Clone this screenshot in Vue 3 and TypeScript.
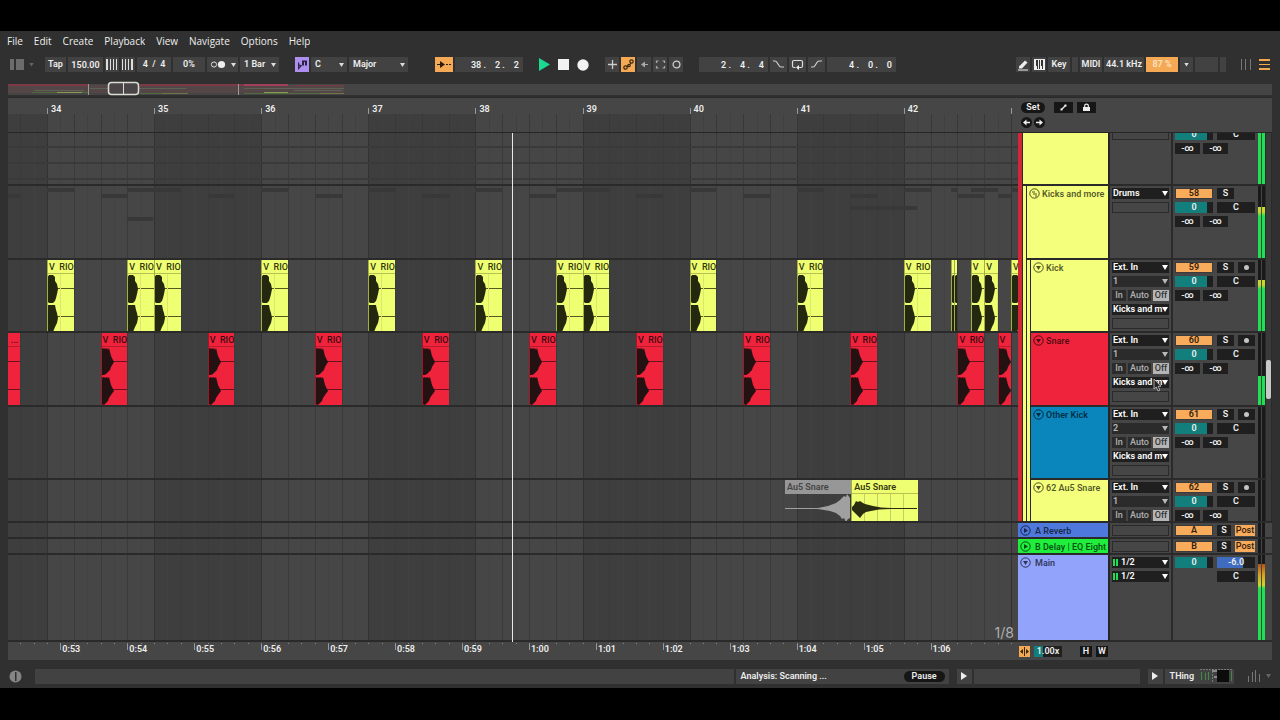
<script setup lang="ts">
import { ref } from 'vue'

const FIRST_BAR = 33.636
const BARS_SHOWN = 9.43

const at = (bar: number) => `${((bar - FIRST_BAR) / BARS_SHOWN) * 100}%`
const span = (bars: number) => `${(bars / BARS_SHOWN) * 100}%`

interface Clip {
  start: number
  length: number
  label: string
  kind: 'kick' | 'snare' | 'tail' | 'reverse' | 'hit'
}

interface Track {
  name: string
  color: string
  depth: number
  type: 'group' | 'inner' | 'audio'
  input?: string
  channel?: string
  output?: string
  number: string
  level: number
  clips: Clip[]
}

const kick = (start: number, length = 0.25, label = 'V  RIO'): Clip => ({ start, length, label, kind: 'kick' })
const snare = (start: number, length = 0.25, label = 'V  RIO'): Clip => ({ start, length, label, kind: 'snare' })

const kicks: Clip[] = [
  kick(34), kick(34.75), kick(35), kick(36), kick(37), kick(38), kick(38.75), kick(39),
  kick(40), kick(41), kick(42), kick(42.4375, 0.031, ''), kick(42.469, 0.031, ''),
  kick(42.625, 0.125, 'V'), kick(42.75, 0.125, 'V'), kick(43, 0.25, 'V'),
]
const snares: Clip[] = [
  { start: 33.5, length: 0.25, label: '...', kind: 'tail' },
  snare(34.5), snare(35.5), snare(36.5), snare(37.5), snare(38.5), snare(39.5),
  snare(40.5), snare(41.5), snare(42.5), snare(42.875, 0.125, 'V'),
]

const tracks: Track[] = [
  { name: '', color: '#f4ff7c', depth: 0, type: 'group', number: '', level: 96, clips: [] },
  { name: 'Kicks and more', color: '#f4ff7c', depth: 1, type: 'inner', input: 'Drums', number: '58', level: 71, clips: [] },
  { name: 'Kick', color: '#f4ff7c', depth: 2, type: 'audio', input: 'Ext. In', channel: '1', output: 'Kicks and m', number: '59', level: 72, clips: kicks },
  { name: 'Snare', color: '#ef233c', depth: 2, type: 'audio', input: 'Ext. In', channel: '1', output: 'Kicks and m', number: '60', level: 40, clips: snares },
  { name: 'Other Kick', color: '#0a86bd', depth: 2, type: 'audio', input: 'Ext. In', channel: '2', output: 'Kicks and m', number: '61', level: 0, clips: [] },
  {
    name: '62 Au5 Snare', color: '#f4ff7c', depth: 2, type: 'audio', input: 'Ext. In', channel: '1', number: '62', level: 0,
    clips: [
      { start: 40.89, length: 0.62, label: 'Au5 Snare', kind: 'reverse' },
      { start: 41.51, length: 0.62, label: 'Au5 Snare', kind: 'hit' },
    ],
  },
]

const returns = [
  { id: 'A', name: 'A Reverb', color: '#4f78dc' },
  { id: 'B', name: 'B Delay | EQ Eight', color: '#1fee3c' },
]

const summary = [
  ...kicks.map((c) => ({ start: c.start, length: c.length, row: 'high' })),
  ...snares.map((c) => ({ start: c.start, length: c.length, row: 'mid' })),
  { start: 34.75, length: 0.24, row: 'low' },
  { start: 41.5, length: 0.62, row: 'mid2' },
]

const bars = Array.from({ length: 10 }, (_, i) => 34 + i)
const darkBars = [33, 35, 37, 39, 41]
const gridLines = Array.from({ length: 75 }, (_, i) => ({
  bar: 33.75 + i * 0.125,
  beat: i % 2 === 0,
  barLine: (i - 2) % 8 === 0,
}))
const seconds = Array.from({ length: 14 }, (_, i) => {
  const s = 53 + i
  return { bar: 34.125 + i * 0.625, label: `${Math.floor(s / 60)}:${String(s % 60).padStart(2, '0')}` }
})

const tempo = ref('150.00')
const position = ref('38 .    2 .    2')
const loopStart = ref('2 .    4 .    4')
const loopLength = ref('4 .    0 .    0')

const kickShape =
  'M0 4L2 1L6 1L8 3L8 7L10 10L11 15L10 20L9 24L8 27L6 29L2 29L0 27ZM0 31L8 31L9 36L10 39L11 44L10 49L8 53L6 58L2 58L0 56Z'
const snareShape =
  'M0 2L2 1L3 2L4 1L5 2L6 1L7 3L8 1L9 5L10 9L13 15L10 20L9 23L7 25L5 27L3 28L0 28ZM0 31L3 30L4 31L5 30L7 31L8 30L9 34L10 38L13 44L10 48L8 51L7 54L5 56L3 58L0 57Z'
</script>

<template>
  <main class="app">
    <nav class="menu">
      <button v-for="m in ['File', 'Edit', 'Create', 'Playback', 'View', 'Navigate', 'Options', 'Help']" :key="m">{{ m }}</button>
    </nav>

    <header class="toolbar">
      <div class="group">
        <button class="flat browser" aria-label="Browser layout">
          <svg width="14" height="15" viewBox="0 0 14 15"><path fill="#6c6c6c" d="M0 2h4v11H0zM6 2h8v11H6z" /></svg>
        </button>
        <span class="drop-mark"></span>
        <button class="cell tap">Tap</button>
        <input v-model="tempo" class="cell tempo" aria-label="Tempo" />
        <button class="cell nudge" aria-label="Nudge down">
          <svg width="12" height="11" viewBox="0 0 12 11"><path fill="#ddd" d="M0 0h2v11H0zM4 0h1v11H4zM7 0h1v11H7zM10 0h1v11h-1z" /></svg>
        </button>
        <button class="cell nudge" aria-label="Nudge up">
          <svg width="12" height="11" viewBox="0 0 12 11"><path fill="#ddd" d="M0 0h1v11H0zM3 0h1v11H3zM6 0h1v11H6zM9 0h2v11H9z" /></svg>
        </button>
        <button class="cell signature">4 &nbsp;/ &nbsp;4</button>
        <button class="cell swing">0%</button>
        <button class="cell metro" aria-label="Metronome">
          <svg width="26" height="11" viewBox="0 0 26 11"><circle cx="4" cy="5.500" r="2.600" fill="none" stroke="#ddd" /><circle cx="11.500" cy="5.500" r="3.600" fill="#eee" /><path fill="#ddd" d="M21 4h5l-2.500 4z" /></svg>
        </button>
        <label class="pick q"><select class="cell" aria-label="Quantization"><option>1 Bar</option></select></label>
      </div>

      <div class="group scale">
        <button class="cell purple" aria-label="Scale mode">
          <svg width="10" height="11" viewBox="0 0 10 11"><path fill="none" stroke="#2a2048" stroke-width="1.200" d="M1.600 3.500v6l2.600-2.700-2.600-1" /><path fill="#2a2048" d="M5 1.500h2v5H5zM8 1.500h2v5H8zM5 1.500h5v1.500H5z" /></svg>
        </button>
        <label class="pick key"><select class="cell" aria-label="Root note"><option>C</option></select></label>
        <label class="pick mode"><select class="cell" aria-label="Scale"><option>Major</option></select></label>
      </div>

      <div class="group">
        <button class="cell orange follow" aria-label="Follow">
          <svg width="14" height="9" viewBox="0 0 14 9"><path fill="#2b1c08" d="M0 4h3V1l5 3.500L3 8V5H0zM9 4h2v1H9zM12 4h2v1h-2z" /></svg>
        </button>
        <input v-model="position" class="cell position" aria-label="Position" />
      </div>

      <div class="group transport">
        <button class="flat" aria-label="Play"><svg width="11" height="13" viewBox="0 0 11 13"><path fill="#19dc92" d="M0 0L11 6.500L0 13z" /></svg></button>
        <button class="flat" aria-label="Stop"><svg width="11" height="11" viewBox="0 0 11 11"><path fill="#f2f2f2" d="M0 0h11v11H0z" /></svg></button>
        <button class="flat" aria-label="Record"><svg width="12" height="12" viewBox="0 0 12 12"><circle cx="6" cy="6" r="5.700" fill="#f2f2f2" /></svg></button>
      </div>

      <div class="group tools">
        <button class="cell" aria-label="Overdub"><svg width="11" height="11" viewBox="0 0 11 11"><path stroke="#ccc" stroke-width="1.300" d="M5.500 1v9M1 5.500h9" /></svg></button>
        <button class="cell orange" aria-label="Automation arm"><svg width="11" height="11" viewBox="0 0 11 11"><g fill="none" stroke="#3a270c" stroke-width="1.200"><circle cx="2.500" cy="8.500" r="1.700" /><circle cx="8.500" cy="2.500" r="1.700" /><circle cx="6" cy="6.500" r="1.200" /><path d="M4 7.500l1-1M7 5.500l1-1.500" /></g></svg></button>
        <button class="cell" aria-label="Re-enable automation"><svg width="11" height="11" viewBox="0 0 11 11"><path fill="#aaa" d="M2 5.500L6 2.500V5h3v1H6v2.500z" /></svg></button>
        <button class="cell" aria-label="Capture"><svg width="11" height="11" viewBox="0 0 11 11"><path fill="none" stroke="#aaa" stroke-width="1.200" d="M1.500 4V2h2M7.500 2h2v2M9.500 7v2h-2M3.500 9h-2V7" /></svg></button>
        <button class="cell" aria-label="Session record"><svg width="11" height="11" viewBox="0 0 11 11"><circle cx="5.500" cy="5.500" r="3.400" fill="none" stroke="#ccc" stroke-width="1.300" /></svg></button>
      </div>

      <div class="group">
        <input v-model="loopStart" class="cell loop" aria-label="Loop start" />
        <button class="cell w18" aria-label="Punch in"><svg width="13" height="11" viewBox="0 0 13 11"><path fill="none" stroke="#ccc" stroke-width="1.200" d="M1 2h2c3 0 3 6 6 6h3" /></svg></button>
        <button class="cell w18" aria-label="Loop"><svg width="13" height="11" viewBox="0 0 13 11"><path fill="none" stroke="#ddd" stroke-width="1.200" d="M4.500 8.500H3a1.500 1.500 0 0 1-1.500-1.500V3A1.500 1.500 0 0 1 3 1.500h7A1.500 1.500 0 0 1 11.500 3v4A1.500 1.500 0 0 1 10 8.500H7" /><path fill="#eee" d="M5 8.500l3-2.500v5z" /></svg></button>
        <button class="cell w18" aria-label="Punch out"><svg width="13" height="11" viewBox="0 0 13 11"><path fill="none" stroke="#ccc" stroke-width="1.200" d="M1 8h2c3 0 3-6 6-6h3" /></svg></button>
        <input v-model="loopLength" class="cell loop" aria-label="Loop length" />
      </div>

      <div class="group end">
        <button class="cell" aria-label="Draw mode"><svg width="12" height="12" viewBox="0 0 12 12"><path fill="#eee" d="M2 7.500L8 1.500l2.500 2L5 9.500H2zM1 10.500h10v1H1z" /></svg></button>
        <button class="cell" aria-label="MIDI keyboard"><svg width="11" height="11" viewBox="0 0 11 11"><path fill="#eee" d="M0 0h11v11H0z" /><path fill="#333" d="M2 1h2v6H2zM5 1h1v9H5zM7 1h2v6H7zM3 7h1v3H3zM8 7h1v3H8z" /></svg></button>
        <button class="cell keymap">Key</button>
        <span class="cell led"></span>
        <button class="cell midi">MIDI</button>
        <button class="cell rate">44.1 kHz</button>
        <button class="cell orange cpu">87 %</button>
        <button class="cell narrow" aria-label="CPU menu"><span class="drop-mark light"></span></button>
        <span class="cell disk"></span>
        <span class="cell led"></span>
        <button class="flat views" aria-label="Session view"><svg width="12" height="11" viewBox="0 0 12 11"><path fill="#777" d="M1 0h1v11H1zM5 0h1v11H5zM10 0h1v11h-1z" /></svg></button>
        <button class="flat" aria-label="Arrangement view"><svg width="11" height="11" viewBox="0 0 11 11"><path fill="#f2a94e" d="M0 0h11v2H0zM0 5h11v1H0zM0 9h11v2H0z" /></svg></button>
      </div>
    </header>

    <svg class="overview" viewBox="0 0 1264 16" preserveAspectRatio="none">
      <path fill="#454545" d="M0 3h1264v11H0z" />
      <path fill="#544646" d="M0 4h336v8H0z" />
      <path fill="#7c3a47" d="M0 3h80v2H0zM132 3h104v2H132zM288 4h48v1H288z" />
      <path fill="#a13f58" d="M236 3h44v2h-44z" />
      <path fill="#5d6257" d="M26 9h50v1H26zM82 7h96v1H82zM236 7h100v1H236zM286 9h48v1h-48z" />
      <path fill="#4f6a3c" d="M24 11h56v1H24zM132 12h48v1h-48zM236 12h100v1H236z" />
      <path fill="#8b9a52" d="M49 11h25v1H49zM256 11h24v1h-24z" />
      <path fill="#6c7448" d="M154 12h26v1h-26zM312 12h24v1h-24z" />
      <path fill="#9a9a9a" d="M80 3h1v11h-1zM230 3h1v11h-1z" />
      <rect x="100.500" y="1.500" width="30" height="12" rx="3" fill="#4a4648" stroke="#dcdcd4" stroke-width="1.500" />
      <path fill="#dcdcd4" d="M115 2h1v12h-1z" />
    </svg>

    <section class="arrange">
      <div class="ruler">
        <div class="lane">
          <i v-for="b in darkBars" :key="b" class="shade" :style="{ left: at(b), width: span(1) }"></i>
          <i v-for="g in gridLines" :key="g.bar" class="tickline" :class="{ beat: g.beat }" :style="{ left: at(g.bar) }"></i>
          <span v-for="b in bars" :key="b" class="bar-no" :style="{ left: at(b) }">{{ b < 43 ? b : '' }}</span>
        </div>
        <div class="locators">
          <div class="loc-row">
            <button class="pill">Set</button>
            <button class="black" aria-label="Automation mode"><svg width="9" height="9" viewBox="0 0 9 9"><path stroke="#eee" stroke-width="1.200" d="M2.500 6.500l4-4" /><path fill="#eee" d="M1.500 5.500h2v2h-2zM5.500 1.500h2v2h-2z" /></svg></button>
            <button class="black" aria-label="Lock envelopes"><svg width="9" height="9" viewBox="0 0 9 9"><path fill="#eee" d="M1 4h7v4H1z" /><path fill="none" stroke="#eee" stroke-width="1.200" d="M2.700 4V2.600a1.800 1.500 0 0 1 3.600 0V4" /></svg></button>
          </div>
          <div class="loc-row near">
            <button class="dot" aria-label="Previous locator"><svg width="11" height="11" viewBox="0 0 11 11"><path fill="#eee" d="M2 5.500L5.500 2.500v2.200H9v1.600H5.500v2.200z" /></svg></button>
            <button class="dot" aria-label="Next locator"><svg width="11" height="11" viewBox="0 0 11 11"><path fill="#eee" d="M9 5.500L5.500 2.500v2.200H2v1.600h3.500v2.200z" /></svg></button>
          </div>
        </div>
      </div>

      <div class="body">
        <div class="backdrop">
          <i v-for="b in darkBars" :key="b" class="shade" :style="{ left: at(b), width: span(1) }"></i>
          <i v-for="g in gridLines" :key="g.bar" class="gridline" :class="{ beat: g.beat, first: g.barLine }" :style="{ left: at(g.bar) }"></i>
        </div>

        <div class="tracks">
          <article v-for="(t, ti) in tracks" :key="ti" class="row track">
            <div class="clips">
              <template v-if="ti === 0"><i class="auto a1"></i><i class="auto a2"></i><i class="auto a3"></i></template>
              <template v-if="ti === 1">
                <i v-for="(s, i) in summary" :key="i" class="sum" :class="s.row" :style="{ left: at(s.start), width: span(s.length) }"></i>
              </template>
              <div v-for="(c, i) in t.clips" :key="i" class="clip" :class="c.kind" :style="{ left: at(c.start), width: span(c.length) }">
                <span class="clip-name">{{ c.label }}</span>
                <svg v-if="c.kind === 'kick'" class="wave" width="27" height="58" viewBox="0 0 27 58"><path stroke="#54591f" d="M0 14.500h27M0 42.500h27" /><path stroke="#dbe66a" d="M13.500 0v58" /><path fill="#24280f" :d="kickShape" /></svg>
                <svg v-else-if="c.kind === 'snare'" class="wave" width="27" height="58" viewBox="0 0 27 58"><path stroke="#6a1220" d="M0 14.500h27M0 42.500h27" /><path fill="#241213" :d="snareShape" /></svg>
                <svg v-else-if="c.kind === 'tail'" class="wave" width="27" height="58" viewBox="0 0 27 58"><path stroke="#6a1220" d="M0 14.500h27M0 42.500h27" /></svg>
                <svg v-else-if="c.kind === 'reverse'" class="wave" width="66" height="28" viewBox="0 0 66 28"><path fill="#a0a0a0" d="M0 14L34 14L44 12L52 9L56 6L58 4L60 2L62 3L63 0L66 4V24L64 25L62 28L60 24L58 25L56 22L52 19L46 17L34 15L0 15Z" /></svg>
                <svg v-else class="wave" width="66" height="28" viewBox="0 0 66 28"><path stroke="#c5cf62" d="M13.500 0v28M26.500 0v28M39.500 0v28M52.500 0v28" /><path fill="#2a2c12" d="M0 14L3 11L5 7L7 8L9 7L12 9L14 10L18 11L22 12L30 13.500L40 14H66V15H40L28 15.500L20 17L15 18L12 20L9 24L7 22L4 19L1 16Z" /></svg>
              </div>
            </div>

            <div class="head">
              <i class="stripe red"></i>
              <i v-for="d in t.depth" :key="d" class="stripe yellow"></i>
              <div class="title" :style="{ background: t.color }">
                <svg v-if="t.name" width="11" height="11" viewBox="0 0 11 11" class="fold">
                  <circle cx="5.500" cy="5.500" r="4.700" fill="none" stroke="currentColor" />
                  <path v-if="t.type === 'audio'" fill="currentColor" d="M3 4h5L5.500 8z" />
                  <path v-else fill="none" stroke="currentColor" d="M3 4h3M4 6h4M6 8h2" />
                </svg>
                <span>{{ t.name }}</span>
              </div>
            </div>

            <div class="io">
              <label v-if="t.input" class="drop"><select :aria-label="`${t.name} input`"><option>{{ t.input }}</option></select></label>
              <i v-else class="gap-row"></i>
              <template v-if="t.type === 'audio'">
                <label class="drop dim"><select :aria-label="`${t.name} channel`"><option>{{ t.channel }}</option></select></label>
                <div class="monitor"><button>In</button><button class="auto-btn">Auto</button><button class="on">Off</button></div>
                <label v-if="t.output" class="drop"><select :aria-label="`${t.name} output`"><option>{{ t.output }}</option></select></label>
              </template>
              <i class="blank"></i>
            </div>

            <div class="mix">
              <div class="line">
                <template v-if="t.number">
                  <button class="num">{{ t.number }}</button><button class="solo">S</button>
                  <button v-if="t.type === 'audio'" class="arm" aria-label="Arm"><i></i></button>
                </template>
              </div>
              <div class="line"><button class="vol">0</button><button class="pan">C</button></div>
              <div class="line near"><button class="send">-∞</button><button class="send">-∞</button></div>
            </div>

            <div class="meter">
              <i v-for="n in 2" :key="n"><b :class="{ hot: ti < 3 }" :style="{ height: `${t.level}%` }"></b></i>
            </div>

            <svg v-if="ti === 3" class="pointer" width="9" height="14" viewBox="0 0 9 14"><path fill="#222" stroke="#ccc" stroke-width=".8" d="M1 1v10l2.300-2 1.700 4 1.800-.8L5.200 8.300H8z" /></svg>
          </article>
          <div class="scroll"><i></i></div>
        </div>

        <article v-for="r in returns" :key="r.id" class="row return">
          <div class="clips"></div>
          <div class="head">
            <div class="title" :style="{ background: r.color }">
              <svg width="11" height="11" viewBox="0 0 11 11" class="fold"><circle cx="5.500" cy="5.500" r="4.700" fill="none" stroke="currentColor" /><path fill="currentColor" d="M4 3l4 2.500L4 8z" /></svg>
              <span>{{ r.name }}</span>
            </div>
          </div>
          <div class="io"><i class="blank"></i></div>
          <div class="mix"><div class="line"><button class="num">{{ r.id }}</button><button class="solo small">S</button><button class="post">Post</button></div></div>
          <div class="meter"><i></i><i></i></div>
        </article>

        <article class="row master">
          <div class="clips"><span class="grid-size">1/8</span></div>
          <div class="head">
            <div class="title">
              <svg width="11" height="11" viewBox="0 0 11 11" class="fold"><circle cx="5.500" cy="5.500" r="4.700" fill="none" stroke="currentColor" /><path fill="currentColor" d="M3 4h5L5.500 8z" /></svg>
              <span>Main</span>
            </div>
          </div>
          <div class="io">
            <label v-for="n in ['Cue output', 'Main output']" :key="n" class="drop out"><select :aria-label="n"><option>1/2</option></select></label>
          </div>
          <div class="mix">
            <div class="line"><button class="vol">0</button><button class="cue">-6.0</button></div>
            <div class="line right"><button class="pan">C</button></div>
          </div>
          <div class="meter"><i><b class="full"></b></i><i><b class="full"></b></i></div>
        </article>

        <div class="playhead-lane"><i class="playhead" :style="{ left: at(38.342) }"></i></div>
      </div>

      <div class="footer">
        <div class="lane">
          <i v-for="g in gridLines" :key="g.bar" class="speck" :style="{ left: at(g.bar) }"></i>
          <span v-for="s in seconds" :key="s.label" class="time" :style="{ left: at(s.bar) }">{{ s.label }}</span>
        </div>
        <div class="zoomers">
          <button class="fit" aria-label="Fit view"><svg width="11" height="11" viewBox="0 0 11 11"><path fill="#3a270c" d="M5 1h1v9H5zM1 5.500L4 3v5zM10 5.500L7 3v5z" /></svg></button>
          <button class="speed">1.00x</button>
          <button class="black hw first">H</button>
          <button class="black hw">W</button>
        </div>
      </div>
    </section>

    <footer class="status">
      <button class="flat info" aria-label="Info"><svg width="13" height="13" viewBox="0 0 13 13"><circle cx="6.500" cy="6.500" r="6" fill="#858585" /><path fill="#303030" d="M6 2h1.500v9H6z" /></svg></button>
      <div class="bar grow"></div>
      <div class="bar analysis"><span>Analysis: Scanning ...</span><button class="pause">Pause</button></div>
      <button class="bar play" aria-label="Show clip detail"><svg width="6" height="8" viewBox="0 0 6 8"><path fill="#eee" d="M0 0l6 4-6 4z" /></svg></button>
      <div class="bar detail"></div>
      <button class="bar play" aria-label="Show device detail"><svg width="6" height="8" viewBox="0 0 6 8"><path fill="#eee" d="M0 0l6 4-6 4z" /></svg></button>
      <button class="bar device">
        <span>THing</span>
        <svg width="34" height="16" viewBox="0 0 34 16"><path stroke="#3f8a48" d="M1.500 4v8M5.500 5v7M8.500 4v8M31.500 3v10" /><path stroke="#777" stroke-dasharray="2 1" d="M0 1.500h32M12.500 3v11" /><path fill="#8a8a8a" d="M12 2h5v2h-5zM14 8h3v2h-3z" /><path fill="#0c0c0c" d="M17 2h12v12H17z" /></svg>
      </button>
      <svg class="levels" width="23" height="13" viewBox="0 0 23 13"><path fill="#777" d="M0 6h1v6H0zM4 2h1v10H4zM7 0h1v12H7zM11 4h1v8h-1z" /><path fill="#666" d="M18 4h5l-2.500 4z" /></svg>
    </footer>
  </main>
</template>

<style>
body {
  background: #000;
}
</style>

<style scoped>
* {
  box-sizing: border-box;
}
.app {
  min-height: 720px;
  padding: 31px 0 32px;
  background: #303030 content-box;
  color: #eee;
  font: 600 9px/11px Roboto, 'Liberation Sans', sans-serif;
  user-select: none;
}
button,
input,
select {
  margin: 0;
  padding: 0;
  border: 0;
  border-radius: 0;
  background: none;
  color: inherit;
  font: inherit;
  outline: none;
}
button {
  white-space: nowrap;
  overflow: hidden;
}
svg {
  display: block;
  flex: none;
}
i,
b {
  display: block;
}
select {
  appearance: none;
  width: 100%;
}

.menu {
  display: flex;
  gap: 11px;
  height: 20px;
  padding-left: 7px;
  font: 400 10px/20px 'Open Sans', 'Noto Sans', sans-serif;
}

/* toolbar */
.toolbar {
  display: flex;
  align-items: center;
  gap: 16px;
  height: 27px;
  padding: 0 10px;
}
.group {
  display: flex;
  align-items: center;
  gap: 2px;
}
.scale {
  margin-right: 11px;
}
.cell {
  display: flex;
  align-items: center;
  justify-content: center;
  height: 15px;
  min-width: 14px;
  background: #424242;
  text-align: center;
}
.flat {
  display: flex;
  align-items: center;
}
.browser {
  width: 17px;
}
.drop-mark {
  width: 5px;
  height: 4px;
  background: #666;
  clip-path: polygon(0 0, 100% 0, 50% 100%);
}
.drop-mark.light {
  background: #ddd;
}
.tap {
  width: 21px;
  margin-left: 9px;
}
.tempo {
  width: 35px;
}
.nudge {
  width: 14px;
}
.signature {
  width: 34px;
}
.swing {
  width: 32px;
}
.metro {
  width: 31px;
}
.pick {
  position: relative;
}
.pick::after {
  content: '';
  position: absolute;
  right: 3px;
  top: 6px;
  width: 5px;
  height: 4px;
  background: #ddd;
  clip-path: polygon(0 0, 100% 0, 50% 100%);
  pointer-events: none;
}
.pick .cell {
  width: 100%;
  padding-left: 4px;
  text-align: left;
}
.q {
  width: 39px;
}
.key {
  width: 36px;
}
.mode {
  width: 59px;
}
.purple {
  background: #ad8ff0;
}
.orange {
  background: #f6a955;
}
.follow {
  width: 18px;
}
.position {
  width: 68px;
  text-align: right;
  padding-right: 4px;
}
.transport {
  gap: 8px;
}
.tools .cell {
  width: 14px;
}
.loop {
  width: 69px;
  padding-right: 4px;
  text-align: right;
}
.w18 {
  width: 17px;
}
.end {
  margin-left: auto;
}
.keymap {
  width: 22px;
}
.led {
  width: 6px;
  min-width: 6px;
}
.midi {
  width: 22px;
}
.rate {
  width: 40px;
}
.cpu {
  width: 32px;
  color: #fbe4c4;
}
.narrow {
  width: 13px;
  min-width: 13px;
}
.disk {
  width: 23px;
}
.views {
  margin: 0 5px 0 12px;
}

.overview {
  width: calc(100% - 16px);
  height: 16px;
  margin: 3px 8px 0;
}

/* arrangement */
.arrange {
  margin: 0 8px;
  background: #464646;
  border-top: 1px solid #2a2a2a;
}
.ruler,
.footer {
  display: grid;
  grid-template-columns: minmax(0, 1fr) 254px;
}
.ruler {
  height: 35px;
  border-bottom: 1px solid #262626;
}
.lane {
  position: relative;
  overflow: hidden;
}
.shade {
  position: absolute;
  top: 0;
  bottom: 0;
  background: #3e3e3e;
}
.ruler .shade {
  top: 16px;
}
.tickline {
  position: absolute;
  bottom: 0;
  width: 1px;
  height: 18px;
  background: #404040;
}
.tickline.beat {
  background: #383838;
}
.bar-no {
  position: absolute;
  top: 6px;
  padding-left: 4px;
}
.bar-no::before {
  content: '';
  position: absolute;
  left: 0;
  top: 4px;
  width: 1px;
  height: 6px;
  background: #999;
}
.locators {
  display: flex;
  flex-direction: column;
  gap: 4px;
  padding: 4px 0 0 3px;
}
.loc-row {
  display: flex;
  gap: 4px;
  height: 11px;
}
.loc-row.near {
  gap: 2px;
}
.pill {
  width: 24px;
  border-radius: 6px;
  background: #161616;
  margin-right: 5px;
}
.black {
  display: flex;
  align-items: center;
  justify-content: center;
  width: 19px;
  height: 11px;
  background: #161616;
}
.dot {
  width: 11px;
  height: 11px;
  border-radius: 50%;
  background: #161616;
}

.body {
  position: relative;
  overflow: hidden;
}
.backdrop,
.playhead-lane {
  position: absolute;
  inset: 0 254px 0 0;
  overflow: hidden;
  pointer-events: none;
}
.gridline {
  position: absolute;
  top: 0;
  bottom: 0;
  width: 1px;
  background: #424242;
}
.gridline.beat {
  background: #3a3a3a;
}
.gridline.first {
  background: #323232;
}
.playhead {
  position: absolute;
  top: 0;
  bottom: 0;
  width: 1px;
  background: #e8e8e8;
}
.row {
  position: relative;
  display: grid;
  grid-template-columns: minmax(0, 1fr) 92px 63px 84px 15px;
}
.row > div {
  border-bottom: 2px solid #2a2a2a;
}
.tracks {
  position: relative;
  height: 390px;
  overflow: hidden;
  border-bottom: 2px solid #2a2a2a;
}
.track {
  height: 74px;
}
.track:nth-child(odd) {
  height: 73px;
}
.track:first-child {
  margin-top: -20px;
}
.clips {
  position: relative;
  overflow: hidden;
}
.auto {
  position: absolute;
  left: 0;
  right: 0;
  height: 2px;
  background: #3a3a3a;
}
.a1 {
  top: 33px;
}
.a2 {
  top: 49px;
}
.a3 {
  top: 65px;
}
.sum {
  position: absolute;
  height: 4px;
  background: #383838;
}
.sum.high {
  top: 2px;
}
.sum.mid {
  top: 8px;
}
.sum.low {
  top: 31px;
}
.sum.mid2 {
  top: 20px;
}
.clip {
  position: absolute;
  top: 0;
  bottom: 0;
  overflow: hidden;
  background: #efff72;
  color: #33360f;
  border-left: 1px solid #a3ad45;
}
.clip-name {
  display: block;
  height: 14px;
  padding-left: 1px;
  line-height: 15px;
  white-space: pre;
  font-weight: 500;
  border-bottom: 1px solid #b8c253;
}
.snare,
.tail {
  background: #ef233c;
  color: #3d0a12;
  border-color: #a31528;
}
.snare .clip-name,
.tail .clip-name {
  border-color: #b81a2e;
}
.tail .clip-name {
  text-align: right;
  padding-right: 2px;
}
.reverse {
  background: none;
  color: #444;
  border: 0;
}
.reverse .clip-name {
  background: #979797;
  border: 0;
}
.reverse .clip-name,
.hit .clip-name {
  padding-left: 2px;
  font-weight: 600;
}
.wave {
  margin-left: -1px;
}

.head {
  display: flex;
  border-right: 2px solid #262626;
}
.head .stripe {
  width: 4px;
  flex: none;
  border-right: 1px solid #2a2a2a;
  margin-bottom: -2px;
}
.head .red {
  width: 5px;
  background: #d32638;
}
.head .yellow {
  background: #f4ff7c;
}
.title {
  display: flex;
  gap: 2px;
  flex: 1;
  min-width: 0;
  padding: 2px 0 0 2px;
  color: rgb(0 0 0 / 0.68);
  line-height: 12px;
  white-space: nowrap;
  overflow: hidden;
}
.io {
  display: flex;
  flex-direction: column;
  gap: 3px;
  padding: 2px 2px 0;
  background: #464646;
  border-right: 2px solid #2a2a2a;
  overflow: hidden;
}
.gap-row {
  flex: none;
  height: 11px;
}
.drop {
  position: relative;
  display: block;
  flex: none;
  height: 11px;
  background: #1f1f1f;
  color: #fff;
}
.drop select {
  display: block;
  height: 11px;
  padding-left: 1px;
}
.drop::after {
  content: '';
  position: absolute;
  right: 1px;
  top: 3px;
  width: 6px;
  height: 5px;
  background: currentColor;
  clip-path: polygon(0 0, 100% 0, 50% 100%);
  pointer-events: none;
}
.drop.dim {
  background: #2b2b2b;
  color: #b8b8b8;
}
.blank {
  flex: none;
  height: 11px;
  border: 1px solid #2a2a2a;
}
.monitor {
  display: flex;
  gap: 2px;
  flex: none;
  height: 11px;
  color: #b0b0b0;
  font-weight: 500;
}
.monitor button {
  width: 14px;
  background: #2b2b2b;
}
.monitor .auto-btn {
  flex: 1;
}
.monitor .on {
  width: 16px;
  background: #b5b5b5;
  color: #333;
}
.mix {
  display: flex;
  flex-direction: column;
  gap: 3px;
  padding: 2px 2px 0;
  background: #464646;
  overflow: hidden;
}
.line {
  display: flex;
  flex: none;
  gap: 4px;
  height: 11px;
}
.line.near {
  gap: 3px;
}
.line.right {
  justify-content: flex-end;
}
.line button {
  background: #1f1f1f;
  line-height: 11px;
}
.line .num {
  width: 38px;
  background: #f9ab5c;
  color: #33200a;
  border: 1px solid #3a3a3a;
  line-height: 9px;
}
.line .solo {
  width: 17px;
}
.line .small {
  width: 14px;
}
.line .arm {
  display: grid;
  place-items: center;
  width: 17px;
}
.arm i {
  width: 5px;
  height: 5px;
  border-radius: 50%;
  background: #c4c4c4;
}
.line .vol {
  width: 38px;
  background: linear-gradient(90deg, #127f7c 32px, #1f1f1f 32px);
}
.line .pan,
.line .cue {
  width: 38px;
}
.line .cue {
  background: linear-gradient(90deg, #3f6cbf 26px, #1f1f1f 26px);
}
.line .send {
  width: 25px;
}
.line .post {
  width: 20px;
  background: #f9ab5c;
  color: #33200a;
  font-weight: 500;
}
.meter {
  display: flex;
  gap: 1px;
  padding-left: 1px;
  background: #464646;
}
.meter i {
  display: flex;
  align-items: flex-end;
  width: 3px;
  background: #191919;
}
.meter b {
  width: 100%;
  background: #1fe052;
}
.meter b.hot {
  background: linear-gradient(#c8d82c 5px, #1fe052 9px);
}
.meter b.full {
  height: 90%;
  background: linear-gradient(#b0521c, #d8a020 14%, #c8d82c 28%, #1fe052 32%);
}
.scroll {
  position: absolute;
  top: 0;
  right: 0;
  bottom: 0;
  width: 7px;
  background: #3a3a3a;
  border-left: 1px solid #2a2a2a;
  border-right: 1px solid #2a2a2a;
}
.scroll i {
  height: 10%;
  margin-top: 227px;
  border-radius: 2px;
  background: #c8c8c8;
}
.pointer {
  position: absolute;
  right: 110px;
  top: 45px;
}
.return {
  height: 16px;
}
.return .title,
.master .title {
  gap: 4px;
}
.master {
  height: 87px;
}
.master .title {
  background: #92a3fc;
}
.out select {
  padding-left: 9px;
}
.out::before {
  content: '';
  position: absolute;
  left: 1px;
  top: 2px;
  width: 1px;
  height: 7px;
  border: solid #1fe052;
  border-width: 0 2px;
}
.grid-size {
  position: absolute;
  right: 4px;
  bottom: 0;
  color: #b0b0b0;
  font: 400 14px/14px Inter, sans-serif;
}

.footer {
  height: 18px;
}
.time {
  position: absolute;
  top: 2px;
  padding-left: 2px;
}
.time::before {
  content: '';
  position: absolute;
  left: 0;
  top: 0;
  width: 1px;
  height: 6px;
  background: #999;
}
.speck {
  position: absolute;
  top: 1px;
  width: 1px;
  height: 1px;
  background: #888;
}
.zoomers {
  display: flex;
  align-items: center;
  gap: 4px;
  padding-left: 1px;
}
.fit {
  width: 11px;
  height: 11px;
  background: #f6a955;
}
.speed {
  width: 28px;
  height: 11px;
  background: linear-gradient(90deg, #127f7c 9px, #1f1f1f 9px);
}
.hw {
  width: 12px;
}
.hw.first {
  margin-left: 14px;
}

/* status bar */
.status {
  display: flex;
  align-items: center;
  gap: 2px;
  height: 28px;
  padding: 4px 9px 0 9px;
}
.bar {
  display: flex;
  align-items: center;
  height: 15px;
  background: #424242;
}
.info {
  margin-right: 11px;
}
.grow {
  flex: 1;
}
.analysis {
  width: 213px;
  justify-content: space-between;
  padding: 0 4px 0 5px;
}
.pause {
  width: 41px;
  height: 11px;
  border-radius: 6px;
  background: #161616;
}
.play {
  width: 15px;
  margin-left: 6px;
  justify-content: center;
}
.detail {
  width: 166px;
}
.device {
  gap: 6px;
  padding-left: 5px;
}
.levels {
  margin-left: 12px;
}
</style>
